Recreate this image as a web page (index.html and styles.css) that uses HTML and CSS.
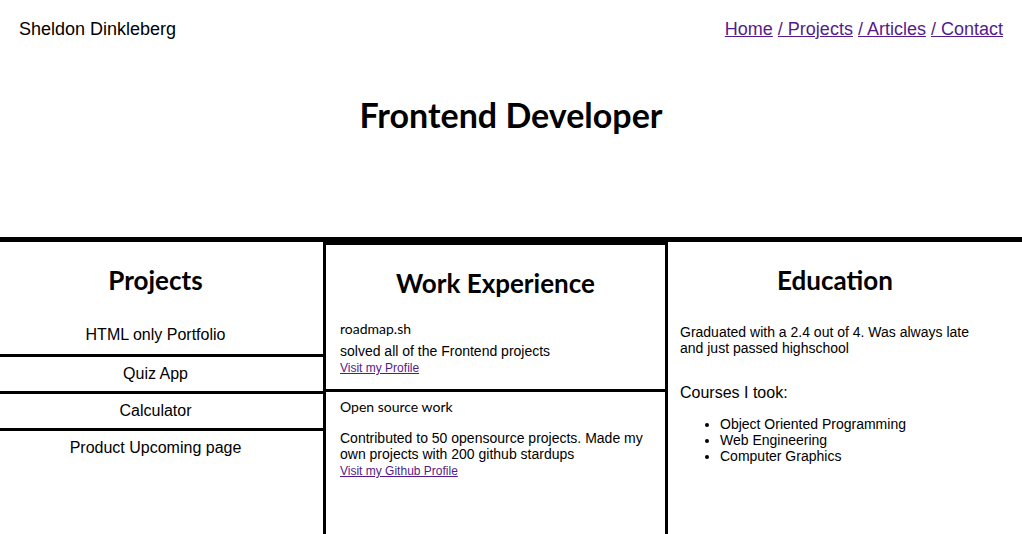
FILE: index.html
```html
<!DOCTYPE html>
<html lang="en">
<head>
<meta charset="utf-8">
<title>Sheldon Dinkleberg</title>
<link rel="stylesheet" href="styles.css">
</head>
<body>
<header class="site-header">
  <div class="brand">Sheldon Dinkleberg</div>
  <nav class="nav">
    <a href="#">Home</a> <a href="#">/ Projects</a> <a href="#">/ Articles</a> <a href="#">/ Contact</a>
  </nav>
</header>
<section class="hero">
  <h1 class="title">Frontend Developer</h1>
</section>
<main class="columns">
  <section class="col col-projects">
    <h2 class="col-title">Projects</h2>
    <ul class="project-list">
      <li>HTML only Portfolio</li>
      <li>Quiz App</li>
      <li>Calculator</li>
      <li>Product Upcoming page</li>
    </ul>
  </section>
  <section class="col col-work">
    <h2 class="col-title">Work Experience</h2>
    <div class="job job-first">
      <h3 class="job-name">roadmap.sh</h3>
      <p class="job-text">solved all of the Frontend projects</p>
      <a class="job-link" href="#">Visit my Profile</a>
    </div>
    <div class="job job-second">
      <h3 class="job-name">Open source work</h3>
      <p class="job-text job-text-gap">Contributed to 50 opensource projects. Made my own projects with 200 github stardups</p>
      <a class="job-link" href="#">Visit my Github Profile</a>
    </div>
  </section>
  <section class="col col-edu">
    <h2 class="col-title">Education</h2>
    <p class="edu-text">Graduated with a 2.4 out of 4. Was always late and just passed highschool</p>
    <p class="courses">Courses I took:</p>
    <ul class="course-list">
      <li>Object Oriented Programming</li>
      <li>Web Engineering</li>
      <li>Computer Graphics</li>
    </ul>
  </section>
</main>
</body>
</html>
```
FILE: styles.css
```css
* { box-sizing: border-box; }

body {
  margin: 0;
  font-family: "Liberation Sans", Arial, sans-serif;
  color: #000;
  background: #fff;
}

.site-header {
  display: flex;
  justify-content: space-between;
  align-items: center;
  height: 57px;
  padding: 1px 19px 0;
  font-size: 18px;
  line-height: 21px;
}

.nav a {
  color: #551a8b;
  text-decoration: underline;
}

.hero {
  height: 180px;
  padding-top: 38px;
}

.title {
  margin: 0;
  text-align: center;
  font-family: "Comic Sans MS", "Lato", sans-serif;
  font-weight: 700;
  font-size: 34px;
  line-height: 40px;
}

.columns {
  display: grid;
  grid-template-columns: 323px 345px 1fr;
  border-top: 5px solid #000;
  min-height: 297px;
}

.col-title {
  margin: 0;
  padding-top: 23px;
  text-align: center;
  font-family: "Comic Sans MS", "Lato", sans-serif;
  font-weight: 700;
  font-size: 26px;
  line-height: 30px;
}

.col-projects .col-title {
  padding-right: 12px;
}

.project-list {
  list-style: none;
  margin: 23px 0 0;
  padding: 0;
}

.project-list li {
  padding-right: 12px;
  line-height: 34px;
  text-align: center;
  font-size: 16px;
}

.project-list li:first-child {
  padding-bottom: 2px;
}

.project-list li + li {
  border-top: 3px solid #000;
}

.col-work {
  border: 3px solid #000;
  border-bottom: 0;
}

.job {
  padding: 0 14px;
}

.job-first {
  padding-top: 23px;
  padding-bottom: 14px;
  border-bottom: 3px solid #000;
}

.job-second {
  padding-top: 7px;
}

.job-name {
  margin: 0;
  font-family: "Comic Sans MS", "Lato", sans-serif;
  font-weight: 400;
  font-size: 14px;
  line-height: 16px;
}

.job-text {
  margin: 6px 0 0;
  font-size: 14px;
  line-height: 16px;
}

.job-text-gap {
  margin-top: 15px;
}

.job-link {
  display: block;
  margin-top: 2px;
  color: #551a8b;
  font-size: 12px;
  line-height: 14px;
}

.col-edu {
  padding: 0 32px 0 12px;
}

.edu-text {
  margin: 29px 0 0;
  font-size: 14px;
  line-height: 16px;
}

.courses {
  margin: 28px 0 0;
  font-size: 16px;
  line-height: 18px;
}

.course-list {
  margin: 14px 0 0;
  padding-left: 40px;
  font-size: 14px;
  line-height: 16px;
}
```
